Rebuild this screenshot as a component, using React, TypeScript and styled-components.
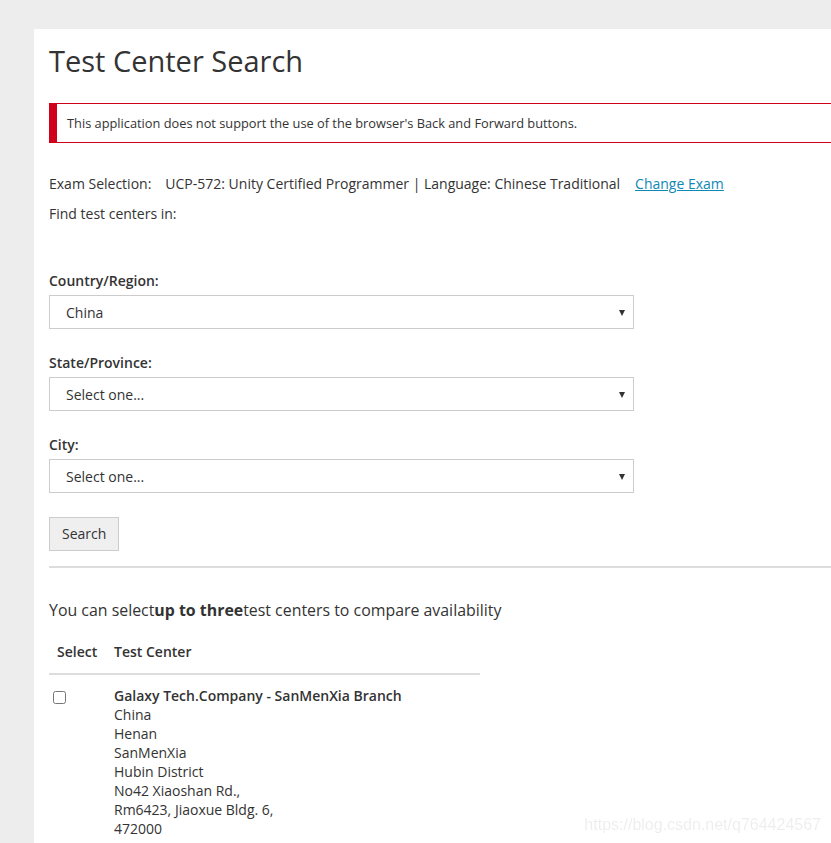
import React from "react";
import styled, { createGlobalStyle } from "styled-components";

const GlobalStyle = createGlobalStyle`
  html, body {
    margin: 0;
    padding: 0;
    background: #ededed;
    overflow: hidden;
  }
  body {
    font-family: "Open Sans", "Liberation Sans", sans-serif;
    color: #333;
  }
`;

const Page = styled.div`
  padding: 29px 0 0 34px;
  min-height: 843px;
`;

const Panel = styled.main`
  width: 1000px;
  min-height: 900px;
  background: #fff;
  padding: 14px 15px 40px 15px;
  box-sizing: border-box;
`;

const Title = styled.h1`
  margin: 0;
  font-size: 29px;
  line-height: 36px;
  font-weight: 400;
  color: #333;
`;

const Alert = styled.div`
  margin-top: 24px;
  border: 1px solid #d0021b;
  border-left: 8px solid #d0021b;
  padding-left: 10px;
  font-size: 12.8px;
  line-height: 38px;
  color: #333;
`;

const InfoLine = styled.p<{ $top: number }>`
  margin: ${(p) => p.$top}px 0 0;
  font-size: 14px;
  line-height: 20px;
`;

const Value = styled.span`
  margin-left: 14px;
`;

const Link = styled.a`
  margin-left: 15px;
  color: #1088b4;
  text-decoration: underline;
  cursor: pointer;
`;

const Form = styled.form`
  margin-top: 47px;
  display: flex;
  flex-direction: column;
  align-items: flex-start;
`;

const Field = styled.div`
  display: flex;
  flex-direction: column;
  gap: 4px;
  margin-bottom: 24px;
`;

const Label = styled.label`
  font-size: 14px;
  line-height: 20px;
  font-weight: 600;
  color: #333;
`;

const SelectBox = styled.div`
  position: relative;
  width: 585px;
  height: 34px;
  box-sizing: border-box;
  border: 1px solid #ccc;
  padding-left: 16px;
  display: flex;
  align-items: center;
  font-size: 14px;
  color: #333;

  &::after {
    content: "";
    position: absolute;
    right: 8px;
    top: 14px;
    border-left: 3.5px solid transparent;
    border-right: 3.5px solid transparent;
    border-top: 6px solid #333;
  }
`;

const Button = styled.button`
  height: 34px;
  padding: 0 12px;
  background: #efefef;
  border: 1px solid #ccc;
  border-radius: 0;
  font-family: inherit;
  font-size: 14px;
  line-height: 30px;
  color: #333;
`;

const Rule = styled.hr`
  margin: 15px 0 0;
  border: 0;
  height: 2px;
  background: #ddd;
`;

const Intro = styled.p`
  margin: 31px 0 0;
  font-size: 15.9px;
  line-height: 22px;
`;

const Table = styled.table`
  margin-top: 11px;
  width: 431px;
  border-collapse: collapse;
  font-size: 14px;
`;

const Th = styled.th<{ $w?: number }>`
  text-align: left;
  font-weight: 600;
  line-height: 20px;
  padding: 10px 8px 11px;
  border-bottom: 2px solid #ddd;
  width: ${(p) => (p.$w ? `${p.$w}px` : "auto")};
  &:last-child {
    padding-left: 0;
  }
`;

const Td = styled.td`
  vertical-align: top;
  padding: 11px 0 0;
  line-height: 19px;
`;

const Check = styled.input`
  margin: 5px 0 0 4px;
  width: 13px;
  height: 13px;
`;

const CenterName = styled.div`
  font-weight: 600;
`;

const Watermark = styled.div`
  position: fixed;
  right: 10px;
  bottom: 9px;
  font-family: "Liberation Sans", Arial, sans-serif;
  font-size: 16px;
  color: rgba(0, 0, 0, 0.07);
`;

const fields = [
  { label: "Country/Region:", value: "China" },
  { label: "State/Province:", value: "Select one..." },
  { label: "City:", value: "Select one..." },
];

const address = [
  "China",
  "Henan",
  "SanMenXia",
  "Hubin District",
  "No42 Xiaoshan Rd.,",
  "Rm6423, Jiaoxue Bldg. 6,",
  "472000",
];

export default function App() {
  return (
    <Page>
      <GlobalStyle />
      <Panel>
        <Title>Test Center Search</Title>
        <Alert>This application does not support the use of the browser's Back and Forward buttons.</Alert>
        <InfoLine $top={31}>
          Exam Selection:
          <Value>UCP-572: Unity Certified Programmer | Language: Chinese Traditional</Value>
          <Link>Change Exam</Link>
        </InfoLine>
        <InfoLine $top={10}>Find test centers in:</InfoLine>
        <Form onSubmit={(e) => e.preventDefault()}>
          {fields.map((f) => (
            <Field key={f.label}>
              <Label>{f.label}</Label>
              <SelectBox>{f.value}</SelectBox>
            </Field>
          ))}
          <Button type="submit">Search</Button>
        </Form>
        <Rule />
        <Intro>
          You can select<strong>up to three</strong>test centers to compare availability
        </Intro>
        <Table>
          <thead>
            <tr>
              <Th $w={49}>Select</Th>
              <Th>Test Center</Th>
            </tr>
          </thead>
          <tbody>
            <tr>
              <Td>
                <Check type="checkbox" />
              </Td>
              <Td>
                <CenterName>Galaxy Tech.Company - SanMenXia Branch</CenterName>
                {address.map((line) => (
                  <div key={line}>{line}</div>
                ))}
              </Td>
            </tr>
          </tbody>
        </Table>
      </Panel>
      <Watermark>https://blog.csdn.net/q764424567</Watermark>
    </Page>
  );
}
